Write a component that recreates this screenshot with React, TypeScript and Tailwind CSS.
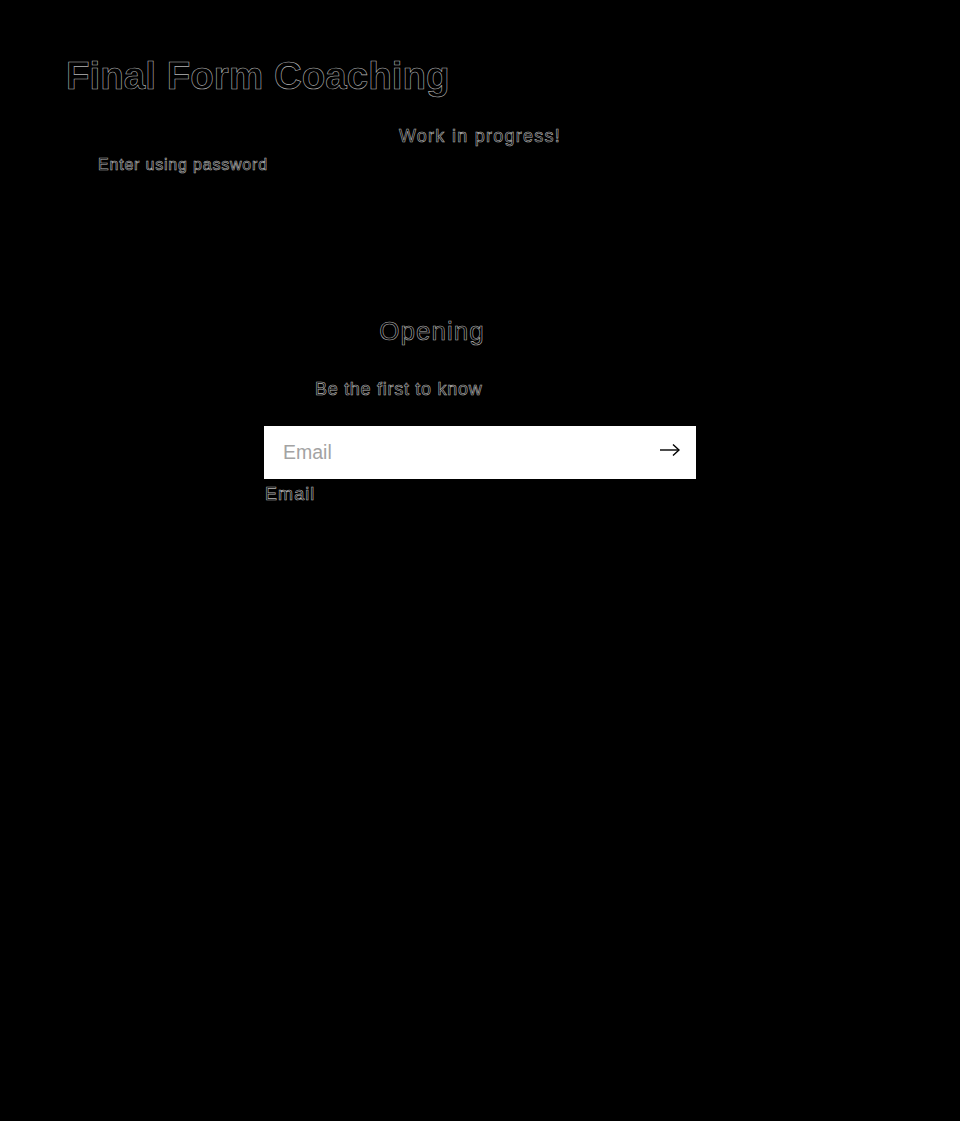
const ghost = "text-black [-webkit-text-stroke:0.6px_#b5b5b5]";

export default function App() {
  return (
    <div className="min-h-screen bg-black font-['Liberation_Sans',Arial,sans-serif]">
      <header className="px-[66px] pt-[52px]">
        <h1 className={`text-[38.6px] font-bold leading-tight ${ghost}`}>Final Form Coaching</h1>
      </header>

      <div className="mt-[23px]">
        <p className={`text-center text-[18px] tracking-[0.07em] ${ghost}`}>Work in progress!</p>
        <p className={`pl-[98px] mt-[3px] text-[16px] tracking-[0.05em] ${ghost}`}>Enter using password</p>
      </div>

      <main className="mt-[138px] flex flex-col items-center">
        <h2 className={`text-[26px] leading-tight tracking-[0.04em] ${ghost}`}>
          Opening <span className="[-webkit-text-stroke:0]">soon…</span>
        </h2>
        <p className={`mt-[28px] pr-[12px] text-[18px] tracking-[0.04em] ${ghost}`}>
          Be the first to know <span className="[-webkit-text-stroke:0]">when we launch.</span>
        </p>

        <form className="mt-[23px] w-[432px]">
          <div className="flex h-[53px] items-center bg-white pl-[19px] pr-[16px]">
            <input
              placeholder="Email"
              className="flex-1 bg-transparent text-[19.5px] text-black placeholder:text-[#a3a3a3] outline-none"
            />
            <svg width="20" height="14" viewBox="0 0 20 14" className="mb-[4px] text-black" fill="none" stroke="currentColor" strokeWidth="1.4">
              <path d="M0 7h19" />
              <path d="M13 1.5 19 7l-6 5.5" />
            </svg>
          </div>
          <label className={`mt-[2px] block pl-[1px] text-[18px] tracking-[0.06em] ${ghost}`}>Email</label>
        </form>
      </main>
    </div>
  );
}
